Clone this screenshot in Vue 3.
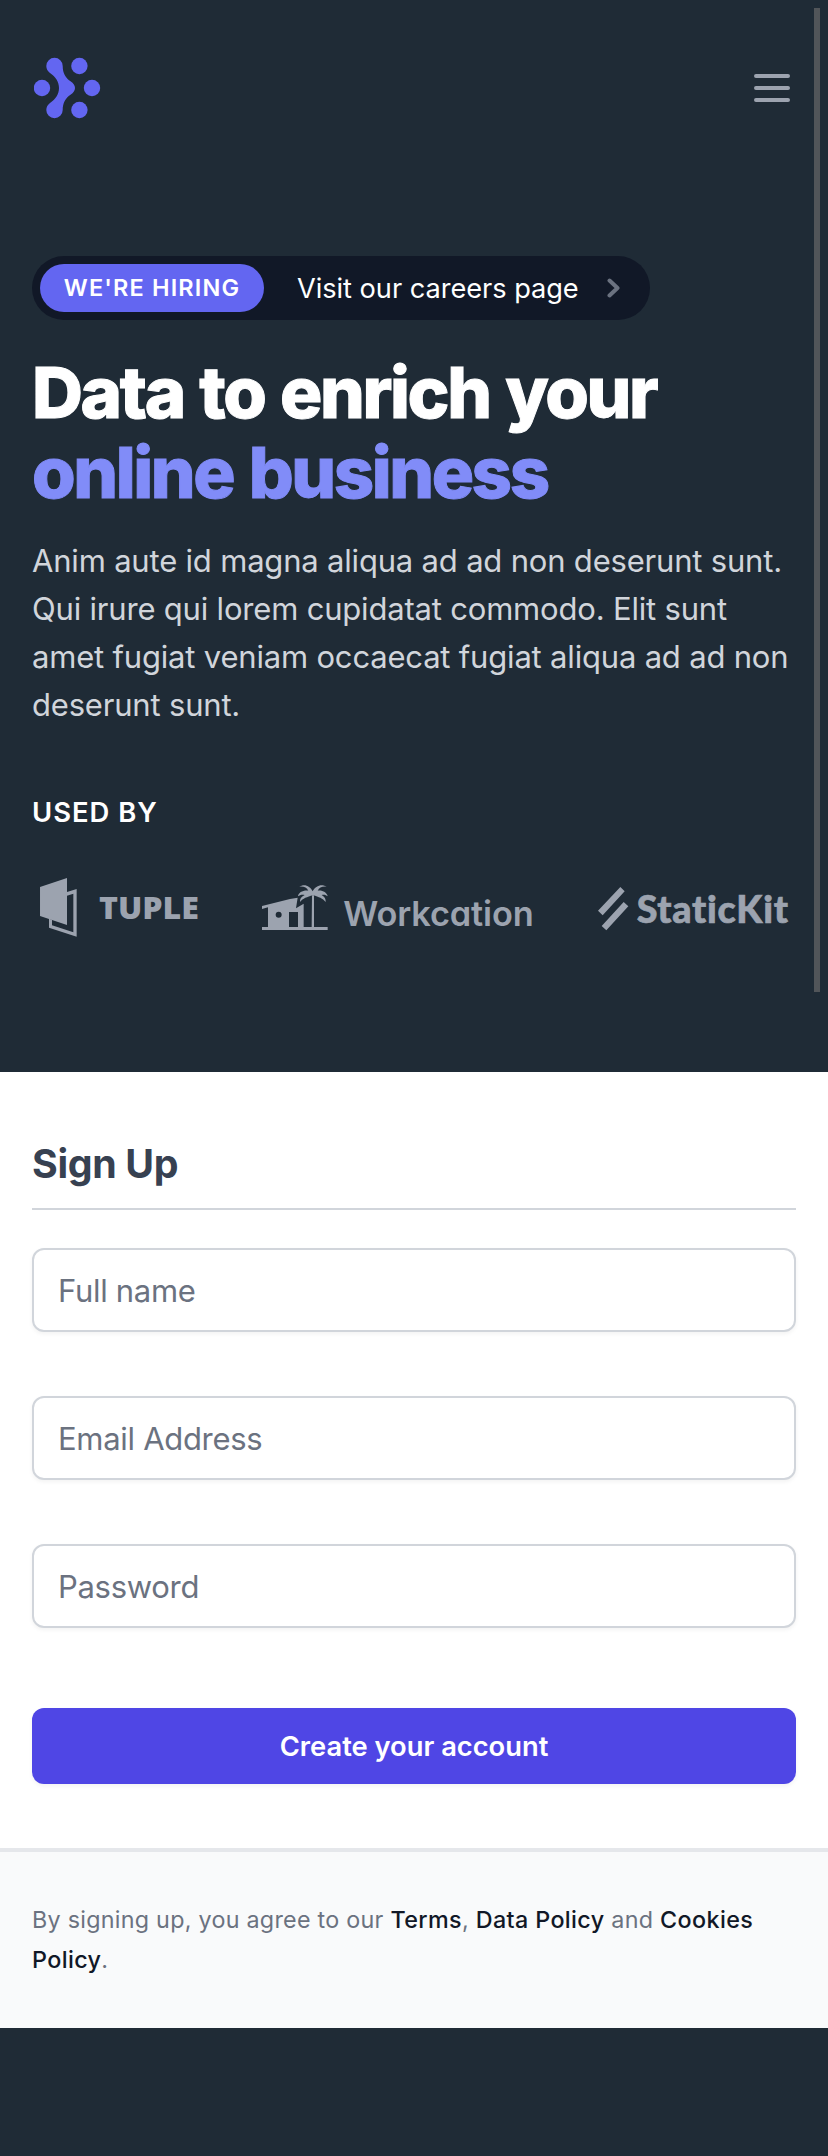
<script setup>
const fields = [
  { id: 'name', type: 'text', label: 'Full name' },
  { id: 'email', type: 'text', label: 'Email Address' },
  { id: 'password', type: 'password', label: 'Password' },
]
</script>

<template>
  <div class="page">
    <section class="hero">
      <header class="nav">
        <svg class="mark" viewBox="34 57 67 62" aria-label="Home">
          <circle cx="42" cy="88" r="8.2" />
          <circle cx="92" cy="88" r="8.2" />
          <circle cx="79.4" cy="66" r="8.2" />
          <circle cx="79.4" cy="110" r="8.2" />
          <path d="M46.3 66a8.2 8.2 0 0 1 16.4 0C62.7 73 65.500 78 70.500 81.300C73.500 83.300 75 85.500 75 88C75 90.500 73.500 92.700 70.500 94.700C65.500 98 62.700 103 62.700 110A8.200 8.200 0 0 1 46.300 110C46.300 107 47.700 104.700 50 103C55.500 99 59 94.500 59 88C59 81.500 55.500 77 50 73C47.700 71.300 46.300 69 46.300 66Z" />
        </svg>
        <button class="menu" aria-label="Open menu">
          <svg viewBox="0 0 36 28"><path d="M2 2H34M2 14H34M2 26H34" /></svg>
        </button>
      </header>

      <a class="pill">
        <span class="badge">We're hiring</span>
        <span class="careers">Visit our careers page</span>
        <svg class="chevron" viewBox="0 0 14 20"><path d="M2.500 2.500L10.500 10L2.500 17.500" /></svg>
      </a>

      <h1>Data to enrich your<br><span>online business</span></h1>
      <p class="lead">Anim aute id magna aliqua ad ad non deserunt sunt. Qui irure qui lorem cupidatat commodo. Elit sunt amet fugiat veniam occaecat fugiat aliqua ad ad non deserunt sunt.</p>

      <p class="used">Used by</p>
      <div class="brands">
        <svg class="tuple" viewBox="60 54 475 176">
          <path d="M60 81L141 54V195L60 168Z" />
          <path d="M141 96L170 87V230L87 203V176L96 179V196L160 217V101L141 107Z" />
          <text x="237" y="177" textLength="300" lengthAdjust="spacingAndGlyphs">TUPLE</text>
        </svg>
        <svg class="workcation" viewBox="66 75 812 135">
          <path fill-rule="evenodd" d="M66 138L150 117L173 113L168 145L191 131V201H174V156H147V201H84V142L66 147ZM107 164a9 9 0 1 0 18 0a9 9 0 1 0-18 0Z" />
          <path d="M66 201H215L216 106H222V201H263V210H66Z" />
          <path d="M218 94C210 77 193 70 178 80C193 79 200 83 205 92C190 90 175 97 174 109C180 104 187 103 194 105C183 110 179 118 180 126C189 115 201 111 219 106C237 111 248 115 257 126C258 118 254 110 245 105C251 103 258 104 263 109C261 97 247 90 233 92C238 83 245 79 260 80C245 70 226 77 218 94Z" />
          <text x="310" y="197" textLength="571">Workcation</text>
        </svg>
        <svg class="statickit" viewBox="114 81 570 130">
          <path d="M181 81L194 94L128 166L114 152ZM191 126L205 139L139 211L125 198Z" />
          <text x="230" y="190" textLength="454">StaticKit</text>
        </svg>
      </div>
    </section>

    <section class="signup">
      <h2>Sign Up</h2>
      <form>
        <input v-for="f in fields" :key="f.id" :type="f.type" :placeholder="f.label" :aria-label="f.label">
        <button type="button" class="submit">Create your account</button>
      </form>
    </section>

    <footer>
      <p>By signing up, you agree to our <a>Terms</a>, <a>Data Policy</a> and <a>Cookies Policy</a>.</p>
    </footer>
    <div class="scrollbar"></div>
  </div>
</template>

<style>
body { background: #1f2b36; }
</style>

<style scoped>
* { box-sizing: border-box; }
.page {
  position: relative;
  min-height: 2156px;
  background: #1f2b36;
  font-family: Inter, "Liberation Sans", sans-serif;
  -webkit-font-smoothing: antialiased;
}
h1, h2, p { margin: 0; }
.hero { height: 1072px; padding: 48px 32px 0; }
.nav { display: flex; align-items: center; justify-content: space-between; height: 80px; padding: 0 6px 0 2px; }
.mark { width: 67px; height: 62px; fill: #6366f1; }
.menu { padding: 0; border: 0; background: none; height: 28px; }
.menu svg { display: block; width: 36px; height: 28px; fill: none; stroke: #9ca3af; stroke-width: 4; stroke-linecap: round; }
.pill {
  display: flex; align-items: center; width: 618px; height: 64px;
  margin-top: 128px; padding: 8px; border-radius: 32px; background: #111827; color: #fff;
}
.badge {
  width: 224px; height: 48px; border-radius: 24px; background: #6366f1; text-align: center;
  font-size: 23.5px; font-weight: 600; line-height: 48px; letter-spacing: 1.15px; text-transform: uppercase;
}
.careers { margin-left: 33px; padding-top: 1px; font-size: 27.2px; line-height: 40px; letter-spacing: -.04px; white-space: nowrap; }
.chevron { width: 14px; height: 20px; margin-left: auto; margin-right: 21px; fill: none; stroke: #6b7280; stroke-width: 4; stroke-linecap: round; stroke-linejoin: round; }
h1 { margin-top: 33px; color: #fff; font-size: 70.6px; font-weight: 800; line-height: 80px; letter-spacing: -.034em; word-spacing: 2.500px; -webkit-text-stroke: 1px currentColor; }
h1 span { color: #818cf8; letter-spacing: -.0345em; }
.lead { margin-top: 24px; color: #d1d5db; font-size: 31px; line-height: 48px; letter-spacing: -.19px; }
.used { margin-top: 63px; color: #fff; font-size: 27.4px; font-weight: 600; line-height: 40px; letter-spacing: 1px; text-transform: uppercase; }
.brands { display: flex; align-items: center; justify-content: space-between; height: 60px; margin-top: 45px; padding: 0 8px 0 8px; }
.brands svg { display: block; overflow: visible; fill: #9ca3af; }
.brands text { font-variant-ligatures: none; }
.tuple { width: 158.33px; height: 58.67px; }
.tuple text { font-family: "Open Sans", sans-serif; font-size: 91px; font-weight: 800; }
.workcation { width: 270.67px; height: 45px; margin-left: -1px; }
.workcation text { font-family: Inter, sans-serif; font-size: 103px; font-weight: 600; font-feature-settings: "cv11" 1; }
.statickit { width: 190px; height: 43.33px; margin-top: 3px; }
.statickit text { font-family: Lato, sans-serif; font-size: 113px; font-weight: 900; stroke: #9ca3af; stroke-width: 2px; }
.signup { height: 776px; padding: 64px 32px 0; background: #fff; }
h2 { padding-bottom: 16px; border-bottom: 2px solid #d1d5db; color: #374151; font-size: 39.3px; font-weight: 700; line-height: 56px; letter-spacing: -.35px; box-sizing: content-box; }
form { display: flex; flex-direction: column; gap: 64px; margin-top: 38px; }
input {
  width: 100%; height: 84px; padding: 0 24px; border: 2px solid #d1d5db; border-radius: 12px; background: #fff;
  box-shadow: 0 2px 4px rgba(0, 0, 0, .05); font-family: inherit; font-size: 31px; letter-spacing: -.3px; outline: 0;
}
input::placeholder { color: #6b7280; opacity: 1; }
.submit {
  width: 100%; height: 76px; margin-top: 16px; border: 0; border-radius: 12px; background: #4f46e5; color: #fff;
  box-shadow: 0 2px 4px rgba(0, 0, 0, .05); font-family: inherit; font-size: 27.3px; font-weight: 600; letter-spacing: 0;
}
footer { height: 180px; padding: 48px 32px; border-top: 4px solid #e5e7eb; background: #f9fafb; }
footer p { color: #6b7280; font-size: 23.3px; line-height: 40px; letter-spacing: .27px; }
footer a { color: #111827; font-weight: 500; letter-spacing: .38px; }
.scrollbar { position: absolute; top: 8px; left: 814px; width: 6px; height: 984px; background: #515559; }
</style>
